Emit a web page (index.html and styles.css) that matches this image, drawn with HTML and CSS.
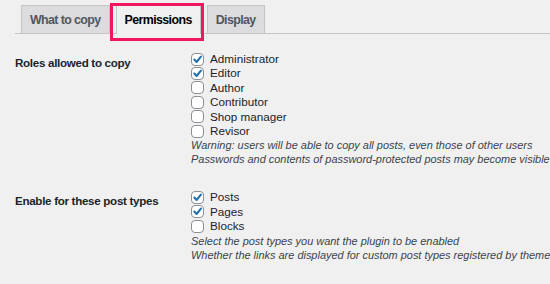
FILE: index.html
```html
<!DOCTYPE html>
<html lang="en">
<head>
<meta charset="utf-8">
<title>Permissions</title>
<link rel="stylesheet" href="styles.css">
</head>
<body>
<div class="page">
  <nav class="tabs">
    <a class="tab">What to copy</a>
    <a class="tab active">Permissions</a>
    <a class="tab">Display</a>
  </nav>
  <div class="highlight"></div>

  <div class="form">
    <section class="row">
      <div class="label">Roles allowed to copy</div>
      <div class="field">
        <label class="opt"><span class="box"><svg viewBox="0 0 11 11"><path d="M2.3 5.6 L4.6 8 L8.9 2.6"/></svg></span>Administrator</label>
        <label class="opt"><span class="box"><svg viewBox="0 0 11 11"><path d="M2.3 5.6 L4.6 8 L8.9 2.6"/></svg></span>Editor</label>
        <label class="opt"><span class="box"></span>Author</label>
        <label class="opt"><span class="box"></span>Contributor</label>
        <label class="opt"><span class="box"></span>Shop manager</label>
        <label class="opt"><span class="box"></span>Revisor</label>
        <p class="desc">Warning: users will be able to copy all posts, even those of other users</p>
        <p class="desc">Passwords and contents of password-protected posts may become visible</p>
      </div>
    </section>

    <section class="row">
      <div class="label">Enable for these post types</div>
      <div class="field">
        <label class="opt"><span class="box"><svg viewBox="0 0 11 11"><path d="M2.3 5.6 L4.6 8 L8.9 2.6"/></svg></span>Posts</label>
        <label class="opt"><span class="box"><svg viewBox="0 0 11 11"><path d="M2.3 5.6 L4.6 8 L8.9 2.6"/></svg></span>Pages</label>
        <label class="opt"><span class="box"></span>Blocks</label>
        <p class="desc">Select the post types you want the plugin to be enabled</p>
        <p class="desc">Whether the links are displayed for custom post types registered by theme</p>
      </div>
    </section>
  </div>
</div>
</body>
</html>
```

FILE: styles.css
```css
html, body {
  margin: 0;
  padding: 0;
  background: #f0f0f1;
  overflow: hidden;
}

.page {
  position: relative;
  width: 550px;
  height: 284px;
  overflow: hidden;
  font-family: "Liberation Sans", Arial, sans-serif;
  color: #1d2327;
}

.tabs {
  display: flex;
  align-items: flex-end;
  margin-left: 15px;
  padding: 5px 0 0 6px;
  border-bottom: 1px solid #c3c4c7;
}

.tab {
  box-sizing: border-box;
  height: 28px;
  display: flex;
  align-items: center;
  padding: 0 8px;
  margin-left: 6px;
  border: 1px solid #c3c4c7;
  border-bottom: none;
  background: #dcdcde;
  color: #50575e;
  font-weight: bold;
  font-size: 12.4px;
  letter-spacing: -0.6px;
  white-space: nowrap;
}

.tab:first-child {
  margin-left: 0;
}

.tab.active {
  position: relative;
  height: 29px;
  margin-bottom: -1px;
  background: #f0f0f1;
  color: #000;
}

.highlight {
  position: absolute;
  left: 110px;
  top: 3px;
  width: 88px;
  height: 32px;
  border: 3px solid #f1165e;
}

.form {
  padding-left: 15px;
  margin-top: 18px;
}

.row {
  display: grid;
  grid-template-columns: 176px 1fr;
  margin-bottom: 24px;
}

.label {
  padding-top: 4px;
  font-weight: bold;
  font-size: 11.6px;
  line-height: 14.4px;
  letter-spacing: -0.3px;
  white-space: nowrap;
}

.field {
  min-width: 0;
}

.opt {
  display: flex;
  align-items: center;
  height: 14.4px;
  font-size: 11.7px;
  line-height: 14.4px;
  white-space: nowrap;
}

.box {
  box-sizing: border-box;
  width: 13px;
  height: 13px;
  margin-right: 6px;
  border: 1px solid #8c8f94;
  border-radius: 4px;
  background: #fff;
  flex: none;
}

.box svg {
  display: block;
  width: 11px;
  height: 11px;
  fill: none;
  stroke: #2271b1;
  stroke-width: 2.1;
  stroke-linecap: round;
  stroke-linejoin: round;
}

.desc {
  margin: 0;
  font-size: 10.95px;
  line-height: 14px;
  font-style: italic;
  color: #3c434a;
  white-space: nowrap;
}
```
